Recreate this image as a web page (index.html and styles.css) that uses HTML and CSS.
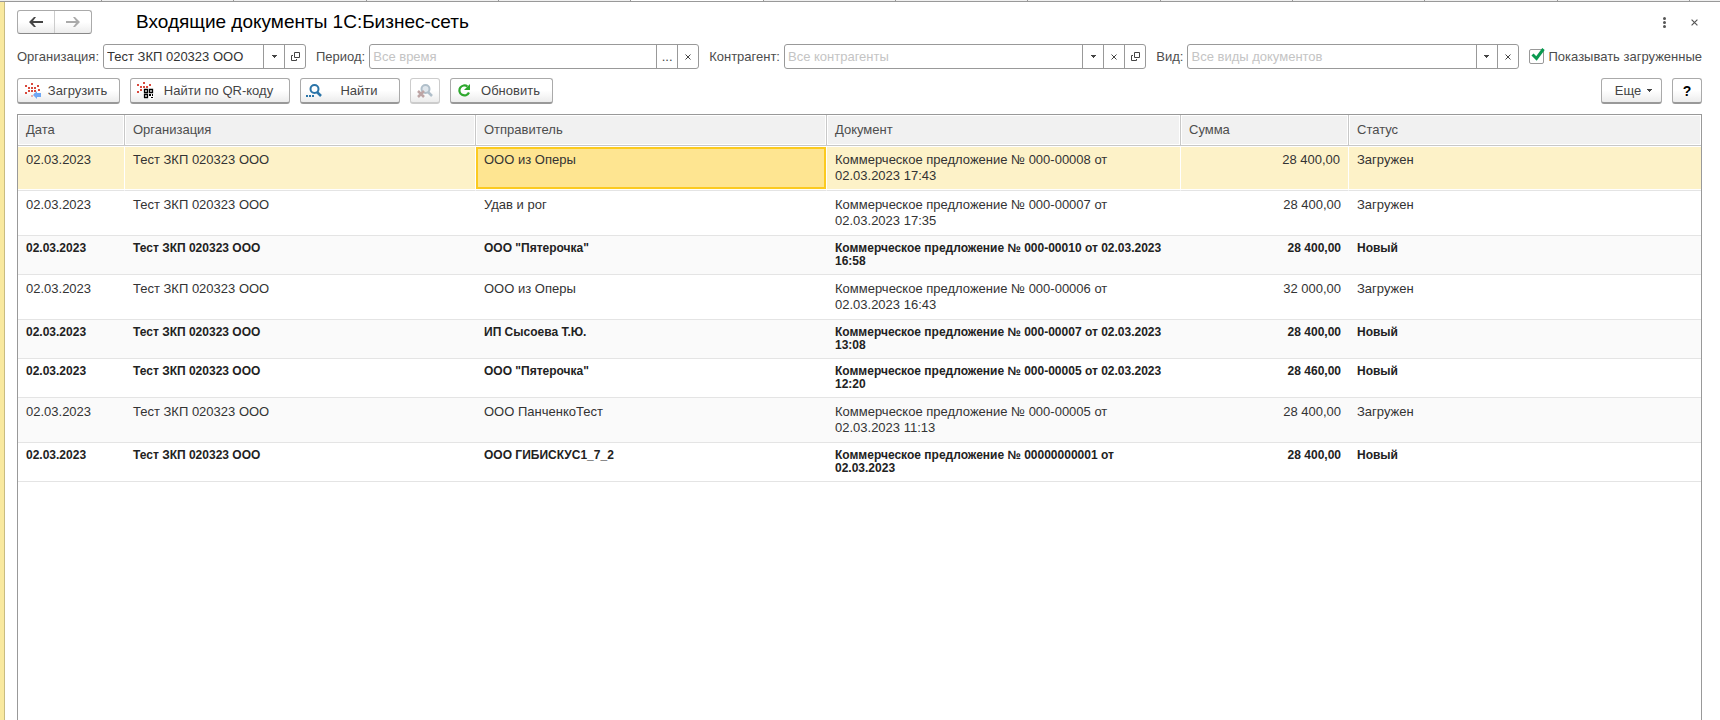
FILE: index.html
```html
<!DOCTYPE html>
<html lang="ru">
<head>
<meta charset="utf-8">
<title>Входящие документы 1С:Бизнес-сеть</title>
<link rel="stylesheet" href="styles.css">
</head>
<body>
<svg class="sprite" aria-hidden="true">
  <symbol id="i-drop" viewBox="0 0 5 3"><path d="M0 0H5V1H4V2H3V3H2V2H1V1H0Z"/></symbol>
  <symbol id="i-open" viewBox="0 0 9 9"><path d="M3.500 .5H8.500V5.500H3.500ZM2 3.500H.5V8.500H5.500V7" fill="none" stroke="currentColor"/></symbol>
  <symbol id="i-clear" viewBox="0 0 6 6"><path d="M.5 .5L5.500 5.500M5.500 .5L.5 5.500" fill="none" stroke="currentColor"/></symbol>
  <symbol id="i-left" viewBox="0 0 14 10"><path d="M0 5L5 0H7L4 4H14V6H4L7 10H5Z"/></symbol>
  <symbol id="i-dots" viewBox="0 0 16 15"><path d="M6 0h2v2H6zM0 2h2v2H0zM12 2h2v2h-2zM3 4h2v2H3zM6 4h2v2H6zM9 4h2v2H9zM3 7h2v2H3zM6 7h2v2H6zM9 7h2v2H9zM13 6h2v2h-2zM0 9h2v2H0z"/><path d="M6 12h2v2H6zM9 10h2v2H9z" opacity=".4"/></symbol>
</svg>
<div class="tabs" aria-hidden="true"><i></i><i></i><i></i><i></i><i></i><i class="on"></i><i></i><i></i><i></i><i></i><i></i><i></i><i></i><i></i></div>
<main class="window">
  <header class="head">
    <div class="nav">
      <button aria-label="Назад"><svg width="14" height="10"><use href="#i-left"/></svg></button>
      <button aria-label="Вперед" class="next"><svg width="14" height="10"><use href="#i-left"/></svg></button>
    </div>
    <h1>Входящие документы 1С:Бизнес-сеть</h1>
    <button class="plain" aria-label="Меню"><svg width="3" height="11"><circle cx="1.500" cy="1.500" r="1.500"/><circle cx="1.500" cy="5.500" r="1.500"/><circle cx="1.500" cy="9.500" r="1.500"/></svg></button>
    <button class="plain" aria-label="Закрыть"><svg width="7" height="7" viewBox="0 0 6 6"><use href="#i-clear"/></svg></button>
  </header>

  <form class="filters">
    <div class="group org">
      <label for="org">Организация:</label>
      <div class="field"><input id="org" value="Тест ЗКП 020323 ООО"><button type="button" aria-label="Выбрать"><svg width="5" height="3"><use href="#i-drop"/></svg></button><button type="button" aria-label="Открыть"><svg width="9" height="9"><use href="#i-open"/></svg></button></div>
    </div>
    <div class="group">
      <label for="period">Период:</label>
      <div class="field"><input id="period" placeholder="Все время"><button type="button">...</button><button type="button" aria-label="Очистить"><svg width="6" height="6"><use href="#i-clear"/></svg></button></div>
    </div>
    <div class="group wide">
      <label for="agent">Контрагент:</label>
      <div class="field"><input id="agent" placeholder="Все контрагенты"><button type="button" aria-label="Выбрать"><svg width="5" height="3"><use href="#i-drop"/></svg></button><button type="button" aria-label="Очистить"><svg width="6" height="6"><use href="#i-clear"/></svg></button><button type="button" aria-label="Открыть"><svg width="9" height="9"><use href="#i-open"/></svg></button></div>
    </div>
    <div class="group kind">
      <label for="kind">Вид:</label>
      <div class="field"><input id="kind" placeholder="Все виды документов"><button type="button" aria-label="Выбрать"><svg width="5" height="3"><use href="#i-drop"/></svg></button><button type="button" aria-label="Очистить"><svg width="6" height="6"><use href="#i-clear"/></svg></button></div>
    </div>
    <div class="check">
      <span class="box"><input type="checkbox" id="loaded" checked><svg width="14" height="13" viewBox="0 0 14 13"><path d="M1.500 6.500L5.500 10.500L12.500 1" fill="none" stroke="#0a9a50" stroke-width="3"/></svg></span>
      <label for="loaded">Показывать загруженные</label>
    </div>
  </form>

  <div class="tools">
    <button class="btn load"><svg width="17" height="16"><use href="#i-dots" width="16" height="15" fill="#d9493c"/><path d="M8 12L12 8V10H16V14H12V16Z" fill="#6fa8f5"/></svg><span>Загрузить</span></button>
    <button class="btn qr"><svg width="17" height="17"><use href="#i-dots" width="16" height="15" fill="#d9493c"/><path d="M6 6h11v11H6z" fill="#fff"/><path d="M7.500 7.500h3v3h-3zM12.500 7.500h3v3h-3zM7.500 12.500h3v3h-3z" fill="none" stroke="#000" stroke-width="1.300"/><path d="M12 12h2v2h-2zM15 12h1v2h-1zM14 15h2v1h-2z" fill="#000"/></svg><span>Найти по QR-коду</span></button>
    <button class="btn find"><svg width="16" height="14"><circle cx="8.500" cy="5" r="4" fill="#fff" stroke="#2a74a8" stroke-width="2"/><path d="M11 8L15 12" stroke="#2a74a8" stroke-width="2.500"/><path d="M0 11h2v2H0zM3 11h2v2H3zM6 11h2v2H6z" fill="#2a74a8"/></svg><span>Найти</span></button>
    <button class="btn reset" disabled aria-label="Отменить поиск"><svg width="16" height="14"><circle cx="8.500" cy="5" r="4" fill="#dfe6ec" stroke="#b0bfca" stroke-width="2"/><path d="M11 8L15 12" stroke="#b0bfca" stroke-width="2.500"/><path d="M1 7L7 13M7 7L1 13" stroke="#bda5a5" stroke-width="2.500"/></svg></button>
    <button class="btn refresh"><svg width="13" height="13"><path d="M9.500 2.500A5 5 0 1 0 11 8.500" fill="none" stroke="#2ea82e" stroke-width="2.200"/><path d="M12 0V6H6Z" fill="#2ea82e"/></svg><span>Обновить</span></button>
    <span class="space"></span>
    <button class="btn more"><span>Еще</span><svg width="5" height="3"><use href="#i-drop"/></svg></button>
    <button class="btn help">?</button>
  </div>

  <div class="list">
    <table>
      <colgroup><col class="c-date"><col class="c-name"><col class="c-name"><col class="c-doc"><col class="c-sum"><col></colgroup>
      <thead><tr><th>Дата</th><th>Организация</th><th>Отправитель</th><th>Документ</th><th>Сумма</th><th>Статус</th></tr></thead>
      <tbody>
        <tr class="selected"><td>02.03.2023</td><td>Тест ЗКП 020323 ООО</td><td class="current">ООО из Оперы</td><td>Коммерческое предложение № 000-00008 от<br>02.03.2023 17:43</td><td class="num">28 400,00</td><td>Загружен</td></tr>
        <tr><td>02.03.2023</td><td>Тест ЗКП 020323 ООО</td><td>Удав и рог</td><td>Коммерческое предложение № 000-00007 от<br>02.03.2023 17:35</td><td class="num">28 400,00</td><td>Загружен</td></tr>
        <tr class="new"><td>02.03.2023</td><td>Тест ЗКП 020323 ООО</td><td>ООО "Пятерочка"</td><td>Коммерческое предложение № 000-00010 от 02.03.2023<br>16:58</td><td class="num">28 400,00</td><td>Новый</td></tr>
        <tr><td>02.03.2023</td><td>Тест ЗКП 020323 ООО</td><td>ООО из Оперы</td><td>Коммерческое предложение № 000-00006 от<br>02.03.2023 16:43</td><td class="num">32 000,00</td><td>Загружен</td></tr>
        <tr class="new"><td>02.03.2023</td><td>Тест ЗКП 020323 ООО</td><td>ИП Сысоева Т.Ю.</td><td>Коммерческое предложение № 000-00007 от 02.03.2023<br>13:08</td><td class="num">28 400,00</td><td>Новый</td></tr>
        <tr class="new"><td>02.03.2023</td><td>Тест ЗКП 020323 ООО</td><td>ООО "Пятерочка"</td><td>Коммерческое предложение № 000-00005 от 02.03.2023<br>12:20</td><td class="num">28 460,00</td><td>Новый</td></tr>
        <tr><td>02.03.2023</td><td>Тест ЗКП 020323 ООО</td><td>ООО ПанченкоТест</td><td>Коммерческое предложение № 000-00005 от<br>02.03.2023 11:13</td><td class="num">28 400,00</td><td>Загружен</td></tr>
        <tr class="new"><td>02.03.2023</td><td>Тест ЗКП 020323 ООО</td><td>ООО ГИБИСКУС1_7_2</td><td>Коммерческое предложение № 00000000001 от<br>02.03.2023</td><td class="num">28 400,00</td><td>Новый</td></tr>
      </tbody>
    </table>
  </div>
</main>
</body>
</html>
```
FILE: styles.css
```css
* { box-sizing: border-box; }

body {
  margin: 0;
  min-height: 100vh;
  display: flex;
  flex-direction: column;
  background: #fff;
  color: #333;
  font: 13px/16px "Liberation Sans", Arial, sans-serif;
}

svg { display: block; flex: none; fill: currentColor; }
.sprite { position: absolute; width: 0; height: 0; }

button, input { font: inherit; color: inherit; margin: 0; }
button { padding: 0; border: 0; background: none; display: flex; align-items: center; justify-content: center; }

.tabs { display: flex; height: 2px; overflow: hidden; background: #f0f0f0; border-bottom: 1px solid #999; }
.tabs i { flex: none; width: 132px; border-right: 1px solid #999; }
.tabs i:nth-child(3n) { width: 133px; }
.tabs i:first-child { width: 102px; }
.tabs .on { background: #fff; }

.window {
  flex: 1;
  display: flex;
  flex-direction: column;
  padding: 8px 18px 0 13px;
  border-left: 4px solid #f9e99f;
  box-shadow: inset 1px 0 #c9bc80;
}

.head { display: flex; align-items: center; height: 24px; }
.head h1 { flex: 1; margin: 0 0 0 44px; font-size: 19px; line-height: 24px; font-weight: 400; color: #000; }
.nav { display: flex; height: 24px; border: 1px solid #aaa; border-bottom-color: #888; border-radius: 3px; background: linear-gradient(#fff 50%, #ececec); }
.nav button { width: 36px; color: #444; }
.nav .next { width: 37px; border-left: 1px solid #ccc; color: #aaa; }
.nav .next svg { transform: scaleX(-1); }
.plain { width: 30px; height: 24px; color: #555; }
.plain:last-child { margin-right: -7px; }

.filters { display: flex; align-items: center; gap: 10px; margin-top: 10px; color: #4d4d4d; }
.group { flex: 383 1 0; display: flex; align-items: center; min-width: 0; }
.group.wide { flex-grow: 437; }
.group.kind { flex-grow: 362; }
.group.org { flex: 0 0 289px; }
.group label { flex: none; margin-right: 4px; }
.field { flex: 1; min-width: 0; display: flex; height: 25px; border: 1px solid #999; border-radius: 3px; background: #fff; }
.field input { flex: 1; min-width: 0; border: 0; padding: 0 0 0 3px; background: none; outline: 0; color: #333; }
.field input::placeholder { color: #c4c4c4; opacity: 1; }
.field button { flex: none; width: 21px; border-left: 1px solid #999; color: #444; }
.check { flex: none; display: flex; align-items: center; gap: 5px; }
.box { position: relative; width: 15px; height: 15px; }
.box input { appearance: none; display: block; width: 15px; height: 15px; border: 1px solid #999; border-radius: 2px; background: #fff; }
.box svg { position: absolute; left: 2px; top: -1px; pointer-events: none; }

.tools { display: flex; gap: 10px; margin-top: 9px; color: #444; }
.btn { flex: none; height: 26px; border: 1px solid #aaa; border-bottom: 2px solid #999; border-radius: 3px; background: linear-gradient(#fff 50%, #ececec); }
.btn:disabled { border-color: #ccc; }
.load { width: 103px; gap: 6px; padding-right: 5px; }
.qr { width: 160px; gap: 10px; padding-right: 10px; }
.find { width: 100px; gap: 18px; padding-right: 16px; }
.reset { width: 30px; }
.refresh { width: 103px; gap: 10px; padding-right: 5px; }
.space { flex: 1; }
.more { width: 61px; gap: 6px; padding-left: 4px; }
.help { width: 30px; color: #000; font-size: 14px; font-weight: 700; }

.list { flex: 1; margin-top: 10px; border: 1px solid #999; border-bottom: 0; }
table { width: 100%; table-layout: fixed; border-collapse: separate; border-spacing: 0; }
.c-date { width: 107px; }
.c-name { width: 351px; }
.c-doc { width: 354px; }
.c-sum { width: 168px; }
th, td { padding: 6px 8px; text-align: left; vertical-align: top; font-weight: 400; }
th { height: 31px; vertical-align: middle; background: #f1f1f1; color: #4d4d4d; border-right: 1px solid #c8c8c8; border-bottom: 1px solid #c8c8c8; box-shadow: inset 0 0 0 1px #fff; }
td { height: 45px; border-bottom: 1px solid #e4e4e4; }
tbody tr:nth-child(n+3):nth-child(odd) { background: #fafafa; }
th:last-child, .selected td:last-child { border-right: 0; }
.selected td { background: #fdf2c8; background-clip: padding-box; border-right: 1px solid #fff; box-shadow: inset 0 1px #fff, inset 0 -1px #fff; }
.selected .current { background: #fee591; box-shadow: inset 0 1px #fff, inset 0 -1px #fff, inset 0 3px #fbca20, inset 0 -3px #fbca20, inset 2px 0 #fbca20, inset -2px 0 #fbca20; }
.new td { height: 39px; font-size: 12px; line-height: 13px; font-weight: 700; color: #222; }
.num { text-align: right; }
```
